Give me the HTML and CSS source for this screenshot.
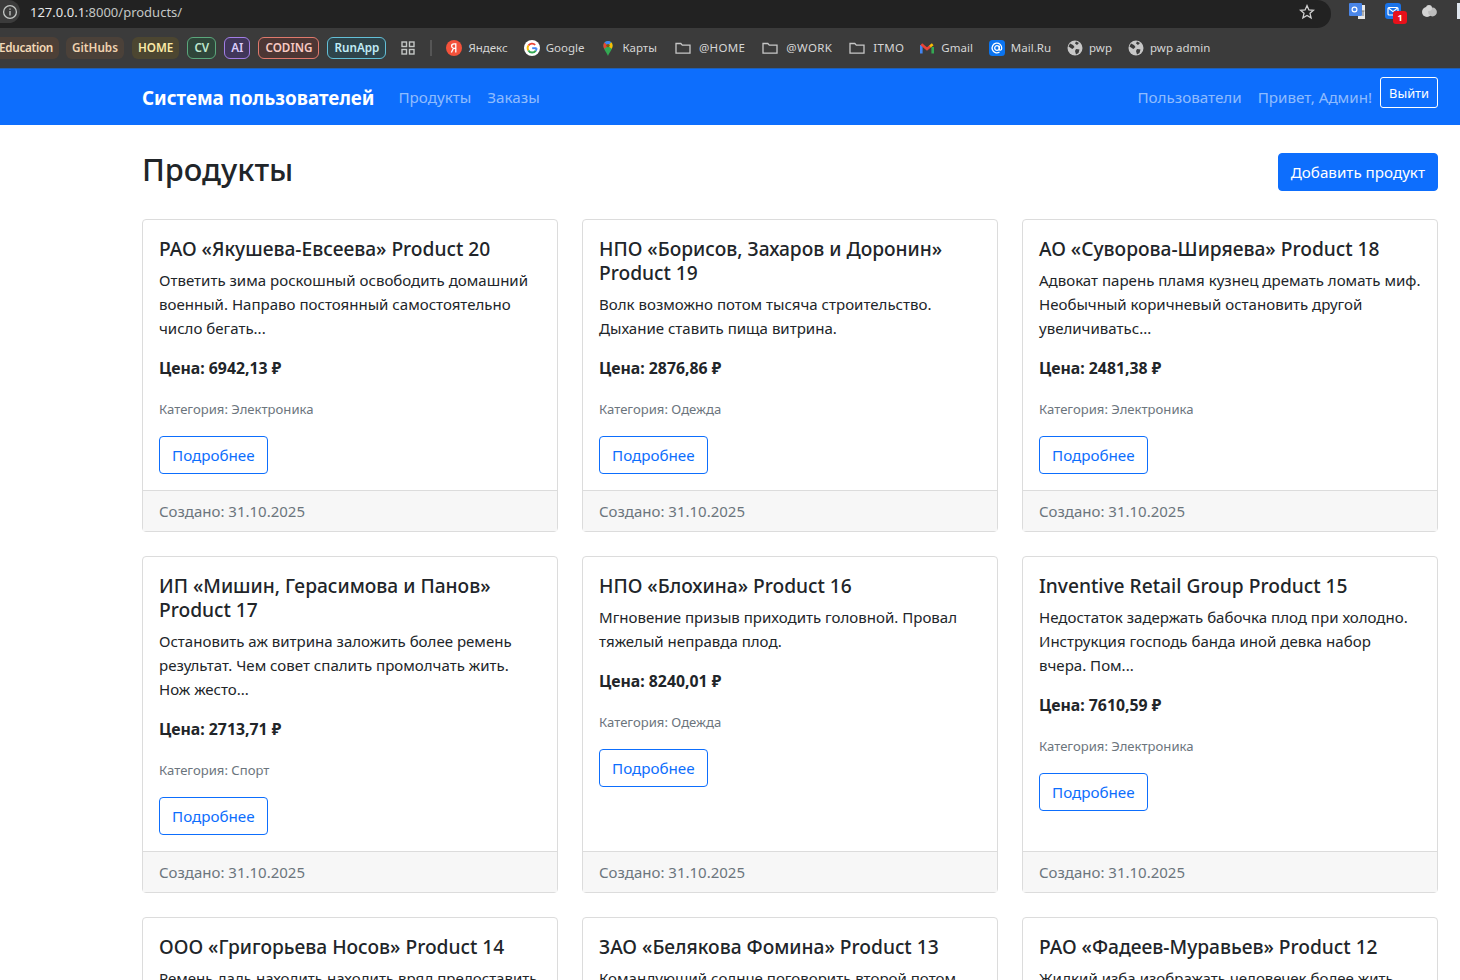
FILE: index.html
```html
<!DOCTYPE html>
<html lang="ru">
<head>
  <meta charset="UTF-8">
  <title>Продукты</title>
  <link rel="stylesheet" href="styles.css">
</head>
<body>

  <!-- Browser chrome -->
  <div class="chrome-top">
    <div class="address">
      <span class="site-info">
        <svg width="16" height="16" viewBox="0 0 16 16" fill="none" stroke="#c4c7c5" stroke-width="1.3"><circle cx="8" cy="8" r="6.4"/><path d="M8 7v4.4M8 4.4v1.4"/></svg>
      </span>
      <span class="url"><span class="url-host">127.0.0.1</span>:8000/products/</span>
      <svg class="star" width="16" height="16" viewBox="0 0 16 16" fill="none" stroke="#d0d0d0" stroke-width="1.3"><path d="M8 1.6l1.9 4.3 4.6.4-3.5 3 1.1 4.6L8 11.5l-4.1 2.4 1.1-4.6-3.5-3 4.6-.4z"/></svg>
    </div>
    <div class="extensions">
      <svg width="17" height="16" viewBox="0 0 17 16"><rect x="9" y="2" width="7" height="14" fill="#e8e8e8"/><rect x="0" y="0" width="13" height="13" rx="1" fill="#4a86e8"/><circle cx="5.500" cy="6.500" r="2.400" fill="none" stroke="#fff" stroke-width="1.200"/><path d="M12.500 8h3M14 8v5" stroke="#777" stroke-width="1"/></svg>
      <span class="ext-mail">
        <svg width="16" height="16" viewBox="0 0 16 16"><rect width="16" height="16" rx="3" fill="#1a73e8"/><rect x="3" y="4.500" width="10" height="7.500" rx="1" fill="none" stroke="#fff" stroke-width="1.200"/><path d="M3.400 5l4.600 3.600L12.600 5" fill="none" stroke="#fff" stroke-width="1.200"/></svg>
        <span class="ext-badge">1</span>
      </span>
      <svg class="ext-puff" width="15" height="14" viewBox="0 0 15 14" fill="#d4d4d4"><circle cx="5" cy="7" r="5"/><circle cx="10.500" cy="7" r="4.400" fill="#bdbdbd"/><circle cx="7" cy="3" r="3"/></svg>
    </div>
    <span class="ext-edge"></span>
  </div>

  <div class="bookmarks">
    <span class="tag tag-edu">Education</span>
    <span class="tag tag-git">GitHubs</span>
    <span class="tag tag-home">HOME</span>
    <span class="tag tag-cv">CV</span>
    <span class="tag tag-ai">AI</span>
    <span class="tag tag-coding">CODING</span>
    <span class="tag tag-run">RunApp</span>
    <svg class="apps" width="14" height="14" viewBox="0 0 14 14" fill="none" stroke="#c4c7c5" stroke-width="1.4"><rect x="1" y="1" width="4.500" height="4.500"/><rect x="8.500" y="1" width="4.500" height="4.500"/><rect x="1" y="8.500" width="4.500" height="4.500"/><rect x="8.500" y="8.500" width="4.500" height="4.500"/></svg>
    <span class="sep"></span>
    <span class="mark"><svg width="16" height="16" viewBox="0 0 16 16"><circle cx="8" cy="8" r="8" fill="#f4523b"/><path d="M9.800 12.500V3.800H8.100C6.500 3.800 5.600 4.700 5.600 6s.7 2 1.800 2.400l-2 4.100M9.800 8.400H8" fill="none" stroke="#fff" stroke-width="1.300"/></svg>Яндекс</span>
    <span class="mark"><svg width="16" height="16" viewBox="0 0 16 16"><circle cx="8" cy="8" r="8" fill="#fff"/><path d="M12.600 8.200H8.200" stroke="#4285f4" stroke-width="1.900"/><path d="M11.200 4.900A4.400 4.400 0 0 0 4.400 5.600" fill="none" stroke="#ea4335" stroke-width="1.900"/><path d="M4.400 5.600a4.400 4.400 0 0 0 0 4.800" fill="none" stroke="#fbbc05" stroke-width="1.900"/><path d="M4.400 10.400a4.400 4.400 0 0 0 7.400.2" fill="none" stroke="#34a853" stroke-width="1.900"/><path d="M11.800 10.600a4.400 4.400 0 0 0 .8-2.400" fill="none" stroke="#4285f4" stroke-width="1.900"/></svg>Google</span>
    <span class="mark"><svg width="16" height="16" viewBox="0 0 16 16"><path d="M8 16C6.800 12.600 3.400 9.600 3.400 5.600a4.600 4.600 0 0 1 9.200 0C12.600 9.600 9.200 12.600 8 16z" fill="#34a853"/><path d="M4.400 2.600a4.600 4.600 0 0 1 6.800-.3L8 6z" fill="#4285f4"/><path d="M11.200 2.300a4.600 4.600 0 0 1 1.400 3.300c0 1.200-.4 2.200-.9 3.200L8 6z" fill="#fbbc05"/><path d="M3.400 5.600c0-1.200.4-2.200 1-3L8 6 4.300 8.800a7 7 0 0 1-.9-3.200z" fill="#ea4335"/><circle cx="8" cy="5.600" r="1.700" fill="#7a5a10"/></svg>Карты</span>
    <span class="mark mark-folder"><svg width="16" height="16" viewBox="0 0 16 16" fill="none" stroke="#c7c7c7" stroke-width="1.300"><path d="M1 3.500h4.800l1.500 1.600H15v8H1z"/></svg>@HOME</span>
    <span class="mark mark-folder"><svg width="16" height="16" viewBox="0 0 16 16" fill="none" stroke="#c7c7c7" stroke-width="1.300"><path d="M1 3.500h4.800l1.500 1.600H15v8H1z"/></svg>@WORK</span>
    <span class="mark mark-folder"><svg width="16" height="16" viewBox="0 0 16 16" fill="none" stroke="#c7c7c7" stroke-width="1.300"><path d="M1 3.500h4.800l1.500 1.600H15v8H1z"/></svg>ITMO</span>
    <span class="mark"><svg width="16" height="16" viewBox="0 0 16 16" fill="none" stroke-width="2.600"><path d="M2.300 13.500V5" stroke="#4285f4"/><path d="M13.700 13.500V7" stroke="#34a853"/><path d="M2.300 4.200L8 9l3.200-2.700" stroke="#ea4335"/><path d="M11 6.500l2.700-2.300" stroke="#fbbc05"/></svg>Gmail</span>
    <span class="mark"><svg width="16" height="16" viewBox="0 0 16 16"><rect width="16" height="16" rx="3.500" fill="#0a74f0"/><circle cx="8" cy="8" r="2.300" fill="none" stroke="#fff" stroke-width="1.300"/><path d="M10.300 5.700V9c0 1.600 2.400 1.600 2.400-.8A4.800 4.800 0 1 0 10.500 12" fill="none" stroke="#fff" stroke-width="1.300"/></svg>Mail.Ru</span>
    <span class="mark"><svg width="16" height="16" viewBox="0 0 16 16"><circle cx="8" cy="8" r="7.500" fill="#c7c7c7"/><path d="M3 3.500l3 1.500 1.500 2-2 2-1-.5-3-2zM9 9l3.500.5-1 3.500-2.500 1.500L8 11zM9 1.500l3 1.500-2 2-2-1.500z" fill="#3b3b3b"/></svg>pwp</span>
    <span class="mark"><svg width="16" height="16" viewBox="0 0 16 16"><circle cx="8" cy="8" r="7.500" fill="#c7c7c7"/><path d="M3 3.500l3 1.500 1.500 2-2 2-1-.5-3-2zM9 9l3.500.5-1 3.500-2.500 1.500L8 11zM9 1.500l3 1.500-2 2-2-1.500z" fill="#3b3b3b"/></svg>pwp admin</span>
  </div>

  <!-- Site navbar -->
  <nav class="navbar">
    <div class="nav-inner">
      <a class="brand">Система пользователей</a>
      <a class="nav-link">Продукты</a>
      <a class="nav-link">Заказы</a>
      <a class="nav-link nav-right">Пользователи</a>
      <span class="nav-link">Привет, Админ!</span>
      <a class="btn-logout">Выйти</a>
    </div>
  </nav>

  <main class="container">
    <div class="page-head">
      <h1>Продукты</h1>
      <a class="btn-add">Добавить продукт</a>
    </div>

    <div class="grid">
      <div class="card">
        <div class="card-body">
          <h5>РАО «Якушева-Евсеева» Product 20</h5>
          <p>Ответить зима роскошный освободить домашний военный. Направо постоянный самостоятельно число бегать...</p>
          <p class="price">Цена: 6942,13 ₽</p>
          <p class="cat">Категория: Электроника</p>
          <a class="btn-more">Подробнее</a>
        </div>
        <div class="card-footer">Создано: 31.10.2025</div>
      </div>

      <div class="card">
        <div class="card-body">
          <h5>НПО «Борисов, Захаров и Доронин» Product 19</h5>
          <p>Волк возможно потом тысяча строительство. Дыхание ставить пища витрина.</p>
          <p class="price">Цена: 2876,86 ₽</p>
          <p class="cat">Категория: Одежда</p>
          <a class="btn-more">Подробнее</a>
        </div>
        <div class="card-footer">Создано: 31.10.2025</div>
      </div>

      <div class="card">
        <div class="card-body">
          <h5>АО «Суворова-Ширяева» Product 18</h5>
          <p>Адвокат парень пламя кузнец дремать ломать миф. Необычный коричневый остановить другой увеличиватьс...</p>
          <p class="price">Цена: 2481,38 ₽</p>
          <p class="cat">Категория: Электроника</p>
          <a class="btn-more">Подробнее</a>
        </div>
        <div class="card-footer">Создано: 31.10.2025</div>
      </div>

      <div class="card">
        <div class="card-body">
          <h5>ИП «Мишин, Герасимова и Панов» Product 17</h5>
          <p>Остановить аж витрина заложить более ремень результат. Чем совет спалить промолчать жить. Нож жесто...</p>
          <p class="price">Цена: 2713,71 ₽</p>
          <p class="cat">Категория: Спорт</p>
          <a class="btn-more">Подробнее</a>
        </div>
        <div class="card-footer">Создано: 31.10.2025</div>
      </div>

      <div class="card">
        <div class="card-body">
          <h5>НПО «Блохина» Product 16</h5>
          <p>Мгновение призыв приходить головной. Провал тяжелый неправда плод.</p>
          <p class="price">Цена: 8240,01 ₽</p>
          <p class="cat">Категория: Одежда</p>
          <a class="btn-more">Подробнее</a>
        </div>
        <div class="card-footer">Создано: 31.10.2025</div>
      </div>

      <div class="card">
        <div class="card-body">
          <h5>Inventive Retail Group Product 15</h5>
          <p>Недостаток задержать бабочка плод при холодно. Инструкция господь банда иной девка набор вчера. Пом...</p>
          <p class="price">Цена: 7610,59 ₽</p>
          <p class="cat">Категория: Электроника</p>
          <a class="btn-more">Подробнее</a>
        </div>
        <div class="card-footer">Создано: 31.10.2025</div>
      </div>

      <div class="card">
        <div class="card-body">
          <h5>ООО «Григорьева Носов» Product 14</h5>
          <p>Ремень даль находить находить вряд предоставить</p>
        </div>
      </div>

      <div class="card">
        <div class="card-body">
          <h5>ЗАО «Белякова Фомина» Product 13</h5>
          <p>Командующий солнце поговорить второй потом</p>
        </div>
      </div>

      <div class="card">
        <div class="card-body">
          <h5>РАО «Фадеев-Муравьев» Product 12</h5>
          <p>Жидкий изба изображать человечек более жить</p>
        </div>
      </div>
    </div>
  </main>

</body>
</html>
```

FILE: styles.css
```css
/* Global */
html, body {
  height: 100%;
}

body {
  margin: 0;
  font-family: "Noto Sans", "Open Sans", sans-serif;
  font-size: 15.05px;
  line-height: 24px;
  color: #212529;
  background-color: #fff;
  overflow: hidden;
}

/* Browser chrome */
.chrome-top {
  display: flex;
  align-items: flex-start;
  height: 28px;
  background-color: #3b3b3b;
}

.address {
  flex: none;
  display: flex;
  align-items: center;
  box-sizing: border-box;
  width: 1331px;
  height: 28px;
  padding-bottom: 5px;
  background-color: #222;
  border-radius: 0 14px 14px 0;
  color: #c4c7c5;
  font-size: 13px;
}

.site-info {
  display: flex;
  align-items: center;
  justify-content: center;
  width: 20px;
  height: 23px;
  margin-right: 10px;
  background-color: #3b3b3b;
  border-radius: 0 12px 12px 0;
}

.url-host {
  color: #e6e6e6;
}

.star {
  margin-left: auto;
  margin-right: 16px;
}

.extensions {
  flex: none;
  display: flex;
  align-items: flex-start;
  gap: 19px;
  margin: 3px 0 0 18px;
}

.ext-mail {
  position: relative;
  display: flex;
}

.ext-puff {
  margin: 2px 0 0 2px;
}

.ext-badge {
  position: absolute;
  left: 8px;
  top: 8px;
  width: 14px;
  height: 13px;
  border-radius: 3px;
  background-color: #e8101a;
  color: #fff;
  font-size: 9px;
  font-weight: 700;
  line-height: 13px;
  text-align: center;
}

.ext-edge {
  flex: none;
  width: 3px;
  height: 16px;
  margin: 3px 0 0 20px;
  background-color: #dfe6ee;
}

.bookmarks {
  display: flex;
  align-items: center;
  height: 40px;
  background-color: #3b3b3b;
  border-bottom: 1px solid #1f5fb5;
  color: #d6d6d6;
  font-size: 11.5px;
  white-space: nowrap;
  overflow: hidden;
}

.tag {
  display: block;
  flex: none;
  height: 20px;
  line-height: 18px;
  padding: 0 5px;
  margin-right: 8px;
  border: 1px solid transparent;
  border-radius: 6px;
  font-size: 11.7px;
  font-weight: 600;
}

.tag-edu {
  margin-left: -7px;
  margin-right: 7px;
  letter-spacing: -0.3px;
  background-color: #4d4037;
  color: #f3d9b8;
}

.tag-git {
  background-color: #4b4139;
  color: #f0d3b0;
}

.tag-home {
  background-color: #4c4631;
  color: #fbeaa6;
}

.tag-cv {
  padding: 0 6px;
  border-color: #5ba77c;
  background-color: #2f463a;
  color: #bfe8cf;
}

.tag-ai {
  padding: 0 6px;
  border-color: #a27ee6;
  background-color: #41365a;
  color: #dccdfa;
}

.tag-coding {
  padding: 0 6px;
  border-color: #e0796c;
  background-color: #4d3634;
  color: #f8c9c2;
}

.tag-run {
  padding: 0 6px;
  border-color: #63c0d8;
  background-color: #2e444b;
  color: #c0ecf7;
}

.apps {
  flex: none;
  margin-left: 7px;
}

.sep {
  flex: none;
  width: 2px;
  height: 16px;
  margin: 0 14px 0 15px;
  background-color: #565656;
}

.mark {
  display: flex;
  align-items: center;
  gap: 6px;
  margin-right: 16px;
}

.mark-folder {
  gap: 8px;
  margin-left: 2px;
  margin-right: 15px;
  letter-spacing: 0.35px;
}

/* Navbar */
.navbar {
  height: 56px;
  background-color: #0d6efd;
}

.nav-inner {
  display: flex;
  align-items: center;
  gap: 16px;
  width: 1296px;
  height: 100%;
  margin-left: 142px;
}

.brand {
  margin-right: 8px;
  padding-top: 2px;
  color: #fff;
  font-size: 18.8px;
  font-weight: 700;
}

.nav-link {
  color: rgba(255, 255, 255, 0.55);
  font-size: 15.2px;
}

.nav-right {
  margin-left: auto;
}

.btn-logout {
  margin-left: -8px;
  margin-bottom: 9px;
  padding: 4px 8px 2px;
  border: 1px solid #fff;
  border-radius: 3px;
  color: #fff;
  font-size: 12.8px;
  line-height: 23px;
}

/* Page */
.container {
  width: 1296px;
  margin-left: 142px;
  padding-top: 28px;
}

.page-head {
  display: flex;
  justify-content: space-between;
  align-items: flex-start;
  margin-bottom: 28px;
}

h1 {
  margin: 0;
  font-size: 30.8px;
  font-weight: 500;
  line-height: 32px;
}

.btn-add {
  padding: 6px 12px;
  border: 1px solid #0d6efd;
  border-radius: 4px;
  background-color: #0d6efd;
  color: #fff;
  font-size: 15.2px;
}

/* Product cards */
.grid {
  display: grid;
  grid-template-columns: repeat(3, 416px);
  gap: 24px;
}

.card {
  display: flex;
  flex-direction: column;
  border: 1px solid #dcdcdc;
  border-radius: 4px;
}

.card-body {
  flex: 1;
  padding: 17px 16px 16px;
}

.card h5 {
  margin: 0 0 7px;
  font-size: 19.2px;
  font-weight: 500;
  line-height: 24px;
}

.card p {
  margin: 0 0 16px;
}

.card .price {
  font-size: 15.8px;
  font-weight: 700;
}

.card .cat {
  padding-top: 1px;
  margin-bottom: 15px;
  color: #6c757d;
  font-size: 13.1px;
}

.btn-more {
  display: inline-block;
  padding: 6px 12px;
  border: 1px solid #0d6efd;
  border-radius: 4px;
  color: #0d6efd;
  font-size: 15.2px;
}

.card-footer {
  padding: 8px 16px;
  background-color: #f7f7f7;
  border-top: 1px solid #dcdcdc;
  color: #6c757d;
  font-size: 15px;
}
```
